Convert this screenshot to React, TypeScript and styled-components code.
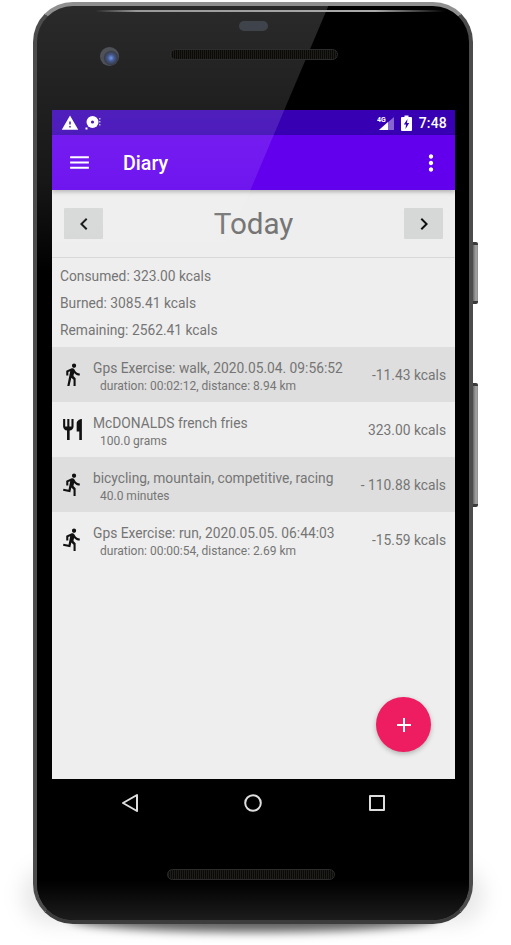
import React from "react";
import styled, { createGlobalStyle } from "styled-components";
import {
  MdWarning,
  MdMenu,
  MdMoreVert,
  MdChevronLeft,
  MdChevronRight,
  MdDirectionsWalk,
  MdDirectionsRun,
  MdRestaurant,
  MdAdd,
} from "react-icons/md";

//Styled Components
const GlobalStyle = createGlobalStyle`
  html, body {
    margin: 0;
    padding: 0;
    background: #ffffff;
    font-family: Roboto, "Liberation Sans", sans-serif;
  }
`;

const Page = styled.div`
  position: relative;
  width: 511px;
  height: 945px;
  padding: 2px 38px 0 33px;
  box-sizing: border-box;
  overflow: hidden;
`;

const FloorShadow = styled.div`
  position: absolute;
  left: 70px;
  top: 905px;
  width: 366px;
  height: 27px;
  border-radius: 50%;
  background: rgba(0, 0, 0, 0.6);
  filter: blur(5px);
`;

const SideGlow = styled.div`
  position: absolute;
  left: 22px;
  top: 866px;
  width: 462px;
  height: 58px;
  border-radius: 40px;
  background: rgba(0, 0, 0, 0.09);
  filter: blur(10px);
`;

const SideButton = styled.div<{ $top: number; $height: number }>`
  position: absolute;
  left: 473px;
  top: ${(p) => p.$top}px;
  width: 5px;
  height: ${(p) => p.$height}px;
  border-radius: 0 2px 2px 0;
  background: linear-gradient(90deg, #666, #a5a5a5 60%, #8a8a8a);
  border-top: 3px solid #3a3a3a;
  border-bottom: 3px solid #3a3a3a;
  box-sizing: border-box;
`;

const Body = styled.div`
  position: relative;
  width: 440px;
  height: 922px;
  box-sizing: border-box;
  border-radius: 40px;
  border: 4px solid #4c4c4c;
  border-top-color: #8f8f8f;
  border-bottom-color: #3c3c3c;
  background: #000;
  overflow: hidden;
  display: flex;
  flex-direction: column;
  align-items: center;
`;

const Glare = styled.div`
  position: absolute;
  left: -4px;
  top: -4px;
  width: 300px;
  height: 300px;
  pointer-events: none;
  z-index: 3;
  clip-path: polygon(0 0, 297px 0, 170px 300px, 0 300px);
  background: linear-gradient(
    180deg,
    rgba(255, 255, 255, 0.17) 0%,
    rgba(255, 255, 255, 0.12) 36%,
    rgba(255, 255, 255, 0.09) 60%,
    rgba(255, 255, 255, 0) 90%
  );
`;

const TopHighlight = styled.div`
  position: absolute;
  left: 58px;
  top: 4px;
  width: 350px;
  height: 2px;
  z-index: 4;
  border-radius: 2px;
  background: linear-gradient(90deg, transparent, #999 12%, #aaa 80%, transparent);
`;

const TopBezel = styled.div`
  position: relative;
  width: 100%;
  height: 104px;
  flex: none;
`;

const Sensor = styled.div`
  position: absolute;
  left: 202px;
  top: 15px;
  width: 29px;
  height: 10px;
  border-radius: 6px;
  background: #1b2029;
`;

const Camera = styled.div`
  position: absolute;
  left: 63px;
  top: 41px;
  width: 19px;
  height: 19px;
  border-radius: 50%;
  background: radial-gradient(circle at 58% 58%, #5b86e6 0, #243a78 22%, #181c2a 42%, #30333a 50%);
`;

const Speaker = styled.div`
  width: 168px;
  height: 11px;
  box-sizing: border-box;
  border-radius: 6px;
  border: 1px solid #2c2c2c;
  background: repeating-linear-gradient(90deg, #1e1d1a 0 1px, #0a0a09 1px 2px);
`;

const TopSpeaker = styled(Speaker)`
  position: absolute;
  left: 133px;
  top: 43px;
  z-index: 4;
`;

const Screen = styled.div`
  position: relative;
  width: 403px;
  height: 669px;
  flex: none;
  display: flex;
  flex-direction: column;
  background: #eeeeee;
  margin-left: 1px;
`;

const StatusBar = styled.div`
  height: 25px;
  flex: none;
  background: #3700b3;
  display: flex;
  align-items: center;
  padding: 0 8px 0 9px;
  color: #fff;
`;

const StatusLeft = styled.div`
  display: flex;
  align-items: center;
  gap: 6px;
  flex: 1;
`;

const StatusTime = styled.span`
  font-size: 14px;
  font-weight: 500;
  margin-left: 7px;
  letter-spacing: 0.2px;
`;

const AppBar = styled.div`
  height: 55px;
  flex: none;
  background: #6200ee;
  color: #fff;
  display: flex;
  align-items: center;
  padding: 0 11px 0 15px;
  box-shadow: 0 2px 4px rgba(0, 0, 0, 0.25);
  z-index: 1;
`;

const AppTitle = styled.div`
  flex: 1;
  margin-left: 31px;
  padding-top: 2px;
  font-size: 19.7px;
  font-weight: 500;
`;

const DateRow = styled.div`
  height: 68px;
  flex: none;
  box-sizing: border-box;
  padding: 0 12px;
  display: flex;
  align-items: center;
  justify-content: space-between;
  border-bottom: 1px solid #d8d8d8;
`;

const DateButton = styled.div`
  width: 39px;
  height: 31px;
  background: #d6d7d7;
  border-radius: 1px;
  display: flex;
  align-items: center;
  justify-content: center;
  color: #111;
`;

const DateLabel = styled.div`
  font-size: 29.6px;
  color: #757575;
`;

const Summary = styled.div`
  padding: 5px 8px 0;
  height: 89px;
  box-sizing: border-box;
  flex: none;
`;

const SummaryLine = styled.div`
  height: 27px;
  line-height: 27px;
  font-size: 13.8px;
  color: #757575;
`;

const Row = styled.div<{ $shaded: boolean }>`
  height: 55px;
  flex: none;
  display: flex;
  align-items: center;
  background: ${(p) => (p.$shaded ? "#dedede" : "#eeeeee")};
  color: #757575;
  padding: 0 9px 0 7px;
`;

const RowIcon = styled.div`
  width: 27px;
  height: 28px;
  display: flex;
  align-items: center;
  justify-content: center;
  color: #111;
  flex: none;
  margin-right: 7px;
`;

const RowText = styled.div`
  flex: 1;
  min-width: 0;
  padding-top: 3px;
`;

const RowTitle = styled.div`
  font-size: 13.8px;
  line-height: 18px;
  white-space: nowrap;
`;

const RowSub = styled.div`
  font-size: 12px;
  line-height: 16px;
  margin: 1px 0 0 7px;
  white-space: nowrap;
`;

const RowValue = styled.div`
  font-size: 13.8px;
  white-space: nowrap;
  margin-top: 1px;
`;

const Fab = styled.div`
  position: absolute;
  right: 24px;
  bottom: 27px;
  width: 55px;
  height: 55px;
  border-radius: 50%;
  background: #ee1d61;
  color: #fff;
  display: flex;
  align-items: center;
  justify-content: center;
  box-shadow: 0 2px 5px rgba(0, 0, 0, 0.25);
`;

const BottomBezel = styled.div`
  flex: 1;
  width: 100%;
  display: flex;
  flex-direction: column;
  align-items: center;
  background: linear-gradient(180deg, #000 72%, #1c1c1c 100%);
`;

const NavBar = styled.div`
  display: grid;
  grid-template-columns: repeat(3, 123.5px);
  justify-items: center;
  align-items: center;
  height: 48px;
  color: #dedede;
`;

const BottomSpeaker = styled(Speaker)`
  margin-top: 42px;
  margin-right: 4px;
`;

const entries = [
  { icon: "walk", title: "Gps Exercise: walk, 2020.05.04. 09:56:52", sub: "duration: 00:02:12, distance: 8.94 km", value: "-11.43 kcals" },
  { icon: "food", title: "McDONALDS french fries", sub: "100.0 grams", value: "323.00 kcals" },
  { icon: "run", title: "bicycling, mountain, competitive, racing", sub: "40.0 minutes", value: "- 110.88 kcals" },
  { icon: "run", title: "Gps Exercise: run, 2020.05.05. 06:44:03", sub: "duration: 00:00:54, distance: 2.69 km", value: "-15.59 kcals" },
];

const EntryIcon: React.FC<{ name: string }> = ({ name }) => {
  if (name === "walk") return <MdDirectionsWalk size={25} />;
  if (name === "food") return <MdRestaurant size={25} />;
  return <MdDirectionsRun size={25} />;
};

const App: React.FC = () => {
  return (
    <>
      <GlobalStyle />
      <Page>
        <SideGlow />
        <FloorShadow />
        <SideButton $top={242} $height={62} />
        <SideButton $top={383} $height={124} />
        <Body>
          <Glare />
          <TopHighlight />
          <TopBezel>
            <Sensor />
            <Camera />
            <TopSpeaker />
          </TopBezel>
          <Screen>
            <StatusBar>
              <StatusLeft>
                <MdWarning size={18} />
                <svg width="18" height="16" viewBox="0 0 18 16">
                  <circle cx="7.5" cy="7" r="6" fill="#fff" />
                  <circle cx="7.5" cy="7" r="1.6" fill="#3700b3" />
                  <rect x="0.5" y="12.5" width="2" height="2" fill="#fff" />
                  <rect x="14" y="3" width="1.5" height="1.5" fill="#b9a6e6" />
                  <rect x="14" y="6" width="1.5" height="1.5" fill="#b9a6e6" />
                  <rect x="14" y="9" width="1.5" height="1.5" fill="#b9a6e6" />
                </svg>
              </StatusLeft>
              <svg width="18" height="16" viewBox="0 0 18 16">
                <path d="M2 15 L17 2 V15 Z" fill="#fff" fillOpacity="0.4" />
                <path d="M2 15 L11 7 V15 Z" fill="#fff" />
                <text x="0" y="7" fontSize="7" fontWeight="700" fill="#fff" fontFamily="Roboto, sans-serif">
                  4G
                </text>
              </svg>
              <svg width="11" height="16" viewBox="0 0 11 16" style={{ marginLeft: 6 }}>
                <path
                  fillRule="evenodd"
                  fill="#fff"
                  d="M3.5 0.5 H7.5 V2 H10 Q11 2 11 3 V15 Q11 16 10 16 H1 Q0 16 0 15 V3 Q0 2 1 2 H3.5 Z M6.5 4 L2.8 9.5 H5 L4.5 14 L8.2 8 H6 Z"
                />
              </svg>
              <StatusTime>7:48</StatusTime>
            </StatusBar>
            <AppBar>
              <MdMenu size={25} />
              <AppTitle>Diary</AppTitle>
              <MdMoreVert size={26} />
            </AppBar>
            <DateRow>
              <DateButton>
                <MdChevronLeft size={24} />
              </DateButton>
              <DateLabel>Today</DateLabel>
              <DateButton>
                <MdChevronRight size={24} />
              </DateButton>
            </DateRow>
            <Summary>
              <SummaryLine>Consumed: 323.00 kcals</SummaryLine>
              <SummaryLine>Burned: 3085.41 kcals</SummaryLine>
              <SummaryLine>Remaining: 2562.41 kcals</SummaryLine>
            </Summary>
            {entries.map((entry, i) => (
              <Row key={entry.title} $shaded={i % 2 === 0}>
                <RowIcon>
                  <EntryIcon name={entry.icon} />
                </RowIcon>
                <RowText>
                  <RowTitle>{entry.title}</RowTitle>
                  <RowSub>{entry.sub}</RowSub>
                </RowText>
                <RowValue>{entry.value}</RowValue>
              </Row>
            ))}
            <Fab>
              <MdAdd size={24} />
            </Fab>
          </Screen>
          <BottomBezel>
            <NavBar>
              <svg width="20" height="20" viewBox="0 0 20 20" fill="none" stroke="currentColor" strokeWidth="2" strokeLinejoin="round">
                <path d="M17 2 L3 10 L17 18 Z" />
              </svg>
              <svg width="20" height="20" viewBox="0 0 20 20" fill="none" stroke="currentColor" strokeWidth="2">
                <circle cx="10" cy="10" r="7.8" />
              </svg>
              <svg width="20" height="20" viewBox="0 0 20 20" fill="none" stroke="currentColor" strokeWidth="2" strokeLinejoin="round">
                <rect x="3" y="3" width="14" height="14" />
              </svg>
            </NavBar>
            <BottomSpeaker />
          </BottomBezel>
        </Body>
      </Page>
    </>
  );
};

export default App;
